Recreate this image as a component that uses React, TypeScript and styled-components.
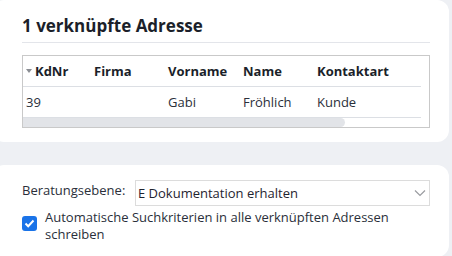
import React from "react";
import styled, { createGlobalStyle } from "styled-components";

const Global = createGlobalStyle`
  html, body { margin: 0; padding: 0; background: #eef0f4; }
  body { font-family: "Open Sans", "Noto Sans", sans-serif; color: #1f2430; width: 452px; height: 256px; overflow: hidden; }
`;

const Page = styled.div`
  display: flex;
  flex-direction: column;
  gap: 23px;
  margin-left: -8px;
  width: 457px;
`;

const Card = styled.section<{ $pad: string }>`
  background: #fff;
  border-radius: 12px;
  padding: ${(p) => p.$pad};
`;

const Title = styled.h2`
  margin: 0;
  font-size: 17px;
  font-weight: 700;
  line-height: 22px;
  color: #1b1f2a;
  padding-bottom: 5px;
  border-bottom: 1px solid #e3e5ea;
`;

const TableBox = styled.div`
  margin-top: 12px;
  border: 1px solid #c9c9c9;
  height: 71px;
  overflow: hidden;
  position: relative;
`;

const Table = styled.table`
  border-collapse: collapse;
  width: 398px;
  table-layout: fixed;
  font-size: 13px;
`;

const Th = styled.th<{ $w: number }>`
  width: ${(p) => p.$w}px;
  text-align: left;
  font-weight: 700;
  padding: 0 3px;
  height: 30px;
  border-bottom: 1px solid #dcdfe4;
  color: #1b1f2a;
  white-space: nowrap;
`;

const Td = styled.td`
  padding: 0 3px;
  height: 30px;
  border-bottom: 1px solid #dcdfe4;
  color: #2a2f3a;
  white-space: nowrap;
`;

const SortArrow = styled.span`
  display: inline-block;
  width: 0;
  height: 0;
  border-left: 3.5px solid transparent;
  border-right: 3.5px solid transparent;
  border-top: 4px solid #8a8d93;
  margin-right: 3px;
  vertical-align: 3px;
`;

const Scrollbar = styled.div`
  position: absolute;
  left: 0;
  bottom: 0;
  width: 322px;
  height: 9px;
  background: #e2e4e8;
  border-radius: 0 5px 5px 0;
`;

const FormRow = styled.div`
  display: flex;
  align-items: center;
`;

const Label = styled.label`
  font-size: 13px;
  color: #2a2f3a;
  width: 113px;
  margin-top: -6px;
`;

const Select = styled.div`
  flex: 1;
  height: 24px;
  border: 1px solid #dcdcdc;
  display: flex;
  align-items: center;
  justify-content: space-between;
  padding: 0 3px 0 2px;
  font-size: 13px;
  color: #1f2430;
`;

const CheckRow = styled.div`
  display: flex;
  align-items: flex-start;
  gap: 8px;
  margin-top: 3px;
`;

const Box = styled.span`
  flex: none;
  width: 15px;
  height: 15px;
  border-radius: 3px;
  background: #1a73e8;
  margin-top: 7px;
  display: flex;
  align-items: center;
  justify-content: center;
`;

const CheckText = styled.span`
  font-size: 13px;
  line-height: 17px;
  color: #2a2f3a;
`;

const cols = [
  { label: "KdNr", w: 62, sort: true },
  { label: "Firma", w: 68 },
  { label: "Vorname", w: 69 },
  { label: "Name", w: 68 },
  { label: "Kontaktart", w: 101 },
];

export default function App() {
  return (
    <>
      <Global />
      <Page>
        <Card $pad="15px 19px 14px 30px">
          <Title>1 verknüpfte Adresse</Title>
          <TableBox>
            <Table>
              <thead>
                <tr>
                  {cols.map((c) => (
                    <Th key={c.label} $w={c.w}>
                      {c.sort && <SortArrow />}
                      {c.label}
                    </Th>
                  ))}
                </tr>
              </thead>
              <tbody>
                <tr>
                  <Td>39</Td>
                  <Td></Td>
                  <Td>Gabi</Td>
                  <Td>Fröhlich</Td>
                  <Td>Kunde</Td>
                </tr>
              </tbody>
            </Table>
            <Scrollbar />
          </TableBox>
        </Card>
        <Card $pad="15px 19px 14px 30px">
          <FormRow>
            <Label>Beratungsebene:</Label>
            <Select>
              <span>E Dokumentation erhalten</span>
              <svg width="12" height="8" viewBox="0 0 12 8">
                <path d="M1 1.5 L6 6.5 L11 1.5" fill="none" stroke="#9a9ca0" strokeWidth="1.2" />
              </svg>
            </Select>
          </FormRow>
          <CheckRow>
            <Box>
              <svg width="11" height="9" viewBox="0 0 11 9">
                <path d="M1.5 4.5 L4.2 7.2 L9.5 1.5" fill="none" stroke="#fff" strokeWidth="2" />
              </svg>
            </Box>
            <CheckText>
              Automatische Suchkriterien in alle verknüpften Adressen
              <br />
              schreiben
            </CheckText>
          </CheckRow>
        </Card>
      </Page>
    </>
  );
}
